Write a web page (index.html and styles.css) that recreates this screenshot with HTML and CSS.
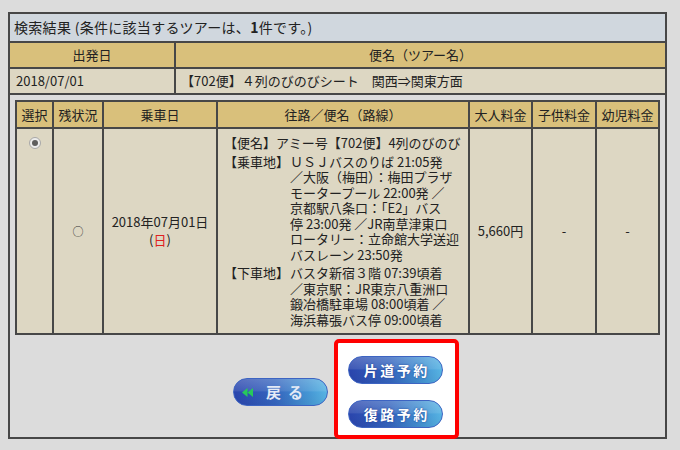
FILE: index.html
```html
<!DOCTYPE html>
<html lang="ja">
<head>
<meta charset="utf-8">
<title>検索結果</title>
<link rel="stylesheet" href="styles.css">
</head>
<body>
<div class="panel">
  <div class="title">検索結果 (条件に該当するツアーは、<b>1</b>件です。)</div>
  <div class="hd">出発日</div>
  <div class="hd">便名（ツアー名）</div>
  <div class="td dep">2018/07/01</div>
  <div class="td tour">【702便】４列のびのびシート　関西⇒関東方面</div>
  <div class="body">
    <div class="inner">
      <div class="ih">選択</div>
      <div class="ih">残状況</div>
      <div class="ih">乗車日</div>
      <div class="ih">往路／便名（路線）</div>
      <div class="ih">大人料金</div>
      <div class="ih">子供料金</div>
      <div class="ih">幼児料金</div>

      <div class="ic sel"><span class="radio"></span></div>
      <div class="ic mid"><span class="avail">○</span></div>
      <div class="ic mid"><div class="date">2018年07月01日<br>(<span class="sun">日</span>)</div></div>
      <div class="ic route">
        <div class="rrow">【便名】アミー号【702便】4列のびのび</div>
        <div class="rrow">
          <div class="lbl">【乗車地】</div>
          <div class="txt">ＵＳＪバスのりば 21:05発<br>／大阪（梅田）：梅田プラザ<br>モータープール 22:00発 ／<br>京都駅八条口：「E2」バス<br>停 23:00発 ／JR南草津東口<br>ロータリー：立命館大学送迎<br>バスレーン 23:50発</div>
        </div>
        <div class="rrow">
          <div class="lbl">【下車地】</div>
          <div class="txt">バスタ新宿３階 07:39頃着<br>／東京駅：JR東京八重洲口<br>鍛冶橋駐車場 08:00頃着 ／<br>海浜幕張バス停 09:00頃着</div>
        </div>
      </div>
      <div class="ic mid">5,660円</div>
      <div class="ic mid">-</div>
      <div class="ic mid">-</div>
    </div>
    <div class="actions">
      <button class="btn back" type="button">
        <svg class="arrow" width="11" height="9" viewBox="0 0 11 9"><polygon points="5.5,0 0,4.5 5.5,9" fill="#27c95a"/><polygon points="11,0 5.5,4.5 11,9" fill="#27c95a"/></svg>
        <span class="backtxt">戻る</span>
      </button>
      <div class="reserve">
        <button class="btn blue" type="button">片道予約</button>
        <button class="btn blue" type="button">復路予約</button>
      </div>
    </div>
  </div>
</div>
</body>
</html>
```
FILE: styles.css
```css
html, body {
  margin: 0;
  padding: 0;
  background: #dcdcdc;
}
body {
  padding: 12px 0 0 8px;
  font-family: "Noto Sans CJK JP", "Noto Sans", sans-serif;
  font-size: 13px;
  color: #222;
}
.panel {
  width: 659px;
  box-sizing: border-box;
  border: 2px solid #474747;
  background: #474747;
  display: grid;
  grid-template-columns: 164px 489px;
  gap: 2px;
}
.title {
  grid-column: 1 / 3;
  height: 27px;
  line-height: 27px;
  background: #d0d7de;
  font-size: 14px;
  padding-left: 4px;
  letter-spacing: 0.3px;
}
.title b {
  font-weight: bold;
}
.hd {
  height: 24px;
  line-height: 24px;
  background: #d9c07b;
  text-align: center;
}
.td {
  height: 24px;
  line-height: 24px;
  background: #ddd7c3;
  white-space: nowrap;
}
.dep {
  padding-left: 6px;
}
.tour {
  padding-left: 5px;
}
.body {
  grid-column: 1 / 3;
  background: #dcdcdc;
  padding: 5px 5px 0 5px;
}
.inner {
  display: grid;
  grid-template-columns: 35px 48px 112px 250px 61px 62px 61px;
  grid-template-rows: 25px 204px;
  gap: 2px;
  border: 2px solid #474747;
  background: #474747;
  width: 645px;
  box-sizing: border-box;
}
.ih {
  background: #d9c07b;
  text-align: center;
  line-height: 25px;
  white-space: nowrap;
}
.ic {
  background: #ddd7c3;
}
.mid {
  display: flex;
  align-items: center;
  justify-content: center;
  text-align: center;
  line-height: 18px;
}
.avail {
  font-size: 11px;
  color: #333;
}
.date {
  text-align: center;
}
.sun {
  color: #e02020;
}
.sel {
  display: flex;
  justify-content: center;
  padding-top: 8px;
  box-sizing: border-box;
}
.radio {
  width: 12px;
  height: 12px;
  box-sizing: border-box;
  border-radius: 50%;
  border: 1px solid #a8a8a8;
  background: #ececec;
  display: flex;
  align-items: center;
  justify-content: center;
}
.radio::after {
  content: "";
  width: 6px;
  height: 6px;
  border-radius: 50%;
  background: #5e5e5e;
}
.route {
  padding: 6px 4px 0 6px;
  display: flex;
  flex-direction: column;
  gap: 3px;
  line-height: 15.5px;
}
.rrow {
  display: flex;
  white-space: nowrap;
}
.lbl {
  width: 66px;
  flex: none;
}
.actions {
  height: 102px;
  display: flex;
  align-items: flex-start;
  padding-left: 218px;
  gap: 6px;
}
.btn {
  border: 1px solid #3d64c2;
  margin: 0;
  padding: 0;
  width: 95px;
  height: 28px;
  box-sizing: border-box;
  border-radius: 14px;
  font-family: "Noto Sans CJK JP", "Noto Sans", sans-serif;
  background:
    linear-gradient(to bottom, rgba(255,255,255,0.22) 0%, rgba(255,255,255,0.10) 45%, rgba(255,255,255,0) 50%, rgba(0,0,0,0.04) 100%),
    linear-gradient(to right, #2a45ad 0%, #3566bf 45%, #4596d4 80%, #57b4e3 100%);
  display: flex;
  align-items: center;
}
.back {
  margin-top: 43px;
  padding-left: 8px;
  justify-content: flex-start;
}
.arrow {
  display: block;
  flex: none;
}
.backtxt {
  margin-left: 13px;
  color: #e3eaf6;
  font-size: 15px;
  font-weight: bold;
  letter-spacing: 7px;
  line-height: 26px;
}
.reserve {
  margin-top: 4px;
  width: 125px;
  height: 100px;
  box-sizing: border-box;
  border: 4px solid #ff0000;
  border-radius: 5px;
  background: #ffffff;
  padding: 13px 0 0 10px;
  display: flex;
  flex-direction: column;
  gap: 16px;
}
.blue {
  justify-content: center;
  color: #ffffff;
  font-size: 14px;
  font-weight: bold;
  letter-spacing: 2.5px;
  text-indent: 2.5px;
  line-height: 26px;
  text-shadow: 0 0 2px #1d3b8f;
}
```
